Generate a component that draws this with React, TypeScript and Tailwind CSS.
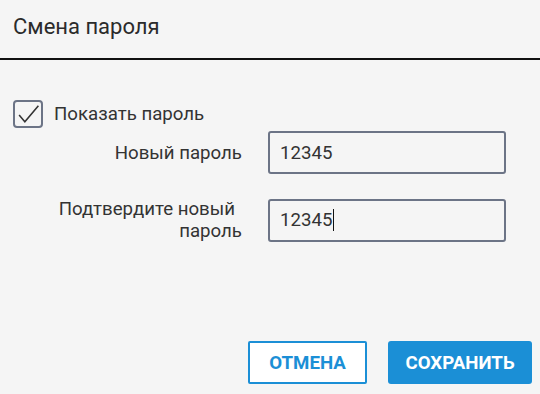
export default function App() {
  return (
    <div
      className="flex h-[394px] w-[540px] flex-col bg-[#f5f5f5] text-[#333]"
      style={{ fontFamily: "Roboto, 'Noto Sans', sans-serif" }}
    >
      <div className="flex h-[60px] shrink-0 items-center border-b-2 border-[#111] px-[13px] pb-[4px]">
        <h1 className="text-[22px] leading-none text-[#2b2b2b]">Смена пароля</h1>
      </div>

      <div className="flex flex-1 flex-col px-[13px] pt-[40px]">
        <label className="flex items-center gap-[11px]">
          <span className="flex h-[28px] w-[30px] items-center justify-center rounded-[4px] border-2 border-[#6c7486] bg-[#f5f5f5]">
            <svg viewBox="0 0 24 24" className="h-[25px] w-[25px]" fill="none" stroke="#333" strokeWidth="1.5">
              <path d="M3 12.5l5.5 6.5L21.5 3.5" />
            </svg>
          </span>
          <span className="text-[18.67px]">Показать пароль</span>
        </label>

        <div className="mt-[3px] flex flex-col gap-[24px]">
          <div className="flex items-center">
            <div className="w-[229px] text-right text-[18.67px] leading-[22px]">Новый пароль</div>
            <div className="ml-[26px] flex h-[43px] w-[238px] items-center rounded-[3px] border-2 border-[#6c7486] px-[10px] text-[18.67px]">
              12345
            </div>
          </div>
          <div className="flex items-center">
            <div className="w-[229px] text-right text-[18.67px] leading-[22px]">
              <div className="mr-[7px]">Подтвердите новый</div>
              <div>пароль</div>
            </div>
            <div className="ml-[26px] flex h-[43px] w-[238px] items-center rounded-[3px] border-2 border-[#6c7486] px-[10px] text-[18.67px]">
              12345
              <span className="ml-[1px] inline-block h-[22px] w-px bg-[#111]" />
            </div>
          </div>
        </div>
      </div>

      <div className="flex justify-end gap-[21px] pb-[10px] pr-[8px]">
        <button className="flex h-[43px] w-[119px] items-center justify-center rounded-[2px] border-2 border-[#1b8fd6] bg-white text-[18.67px] font-bold text-[#1b8fd6]">
          ОТМЕНА
        </button>
        <button className="flex h-[43px] w-[144px] items-center justify-center rounded-[3px] bg-[#1b8fd6] text-[18.67px] font-bold text-white">
          СОХРАНИТЬ
        </button>
      </div>
    </div>
  );
}
